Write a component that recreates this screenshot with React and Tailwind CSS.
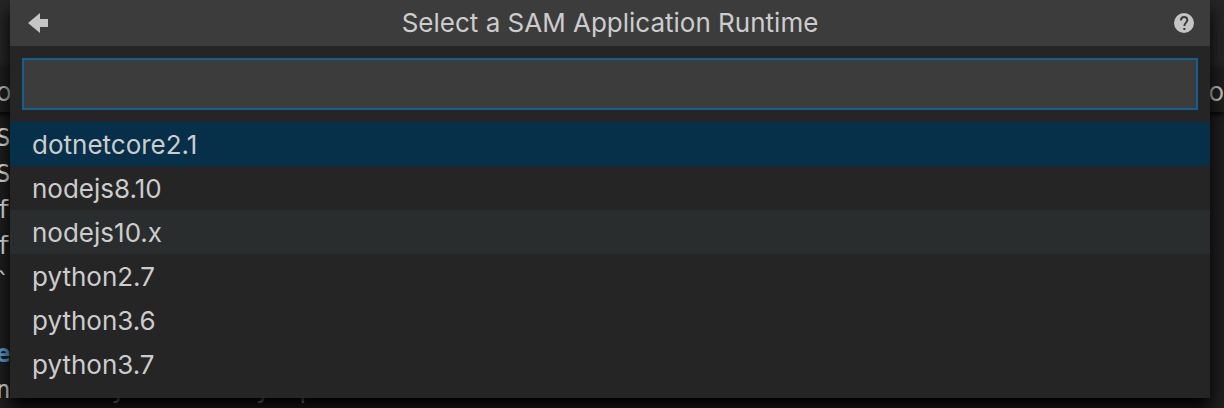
import React from 'react';

const runtimes = [
  { name: 'dotnetcore2.1', tone: 'bg-[#062f4a]' },
  { name: 'nodejs8.10', tone: '' },
  { name: 'nodejs10.x', tone: 'bg-[#2a2d2e]' },
  { name: 'python2.7', tone: '' },
  { name: 'python3.6', tone: '' },
  { name: 'python3.7', tone: '' },
];

const codeLines = [
  { text: 'S' },
  { text: 'S' },
  { text: 'f' },
  { text: 'f' },
  { text: '`' },
  { text: ' ' },
  { text: 'e', tone: 'font-bold text-[#569cd6]' },
  { text: 'n       y         y  p' },
];

function Editor() {
  return (
    <div aria-hidden="true" className="col-start-1 row-start-1 min-w-0 overflow-hidden bg-[#1e1e1e]">
      <div className="h-[68px] bg-[#252526]" />
      <div className="-ml-1 flex h-11 items-center justify-between bg-[#1e1e1e] pt-0.5 text-[26px] text-[#c0c0c0] shadow-[0_2px_6px_#000]">
        <span>o</span>
        <span>o</span>
      </div>
      <div className="-ml-1 h-[296px] overflow-hidden pt-2 font-['DejaVu_Sans_Mono',monospace] text-2xl leading-9 text-[#e4e4e4]">
        {codeLines.map((line, i) => (
          <div key={i} className={`whitespace-pre ${line.tone ?? ''}`}>{line.text}</div>
        ))}
      </div>
    </div>
  );
}

function QuickPick() {
  return (
    <section
      aria-labelledby="pick-title"
      className="relative col-start-1 row-start-1 mb-2.5 ml-2.5 mr-3.5 min-w-0 self-start bg-[#252526] shadow-[0_10px_16px_#000]"
    >
      <header className="flex h-[46px] items-center justify-between bg-[#3c3c3c] px-4">
        <button type="button" aria-label="Back" className="flex size-6 items-center justify-center text-[#c5c5c5]">
          <svg viewBox="0 0 20 20" className="size-5" fill="currentColor">
            <path d="M0 10 12 0v6h8v8h-8v6Z" />
          </svg>
        </button>
        <h1 id="pick-title" className="text-[26px] leading-8">Select a SAM Application Runtime</h1>
        <button type="button" aria-label="Help" className="-mr-1 flex size-7 items-center justify-center">
          <svg viewBox="0 0 20 20" className="size-5">
            <circle cx="10" cy="10" r="10" fill="#c5c5c5" />
            <path d="M6.9 7.5C6.9 5.3 8.3 4 10.1 4s3.2 1.2 3.2 3c0 2.6-2.9 2.7-2.9 6" fill="none" stroke="#3c3c3c" strokeWidth="2" />
            <path d="M9.3 15h2.1v2H9.3Z" fill="#3c3c3c" />
          </svg>
        </button>
      </header>
      <div className="p-3">
        <input
          type="text"
          aria-label="Filter runtimes"
          className="block h-[52px] w-full border-2 border-[#145f92] bg-[#3c3c3c] px-2 text-[26px] outline-none"
        />
      </div>
      <ul className="pb-3">
        {runtimes.map((runtime) => (
          <li key={runtime.name}>
            <button type="button" className={`block h-11 w-full px-[22px] pt-0.5 text-left text-[26px] leading-[42px] ${runtime.tone}`}>
              {runtime.name}
            </button>
          </li>
        ))}
      </ul>
    </section>
  );
}

export default function App() {
  return (
    <main className="grid grid-cols-1 bg-[#1e1e1e] font-['Inter',sans-serif] text-[#cccccc]">
      <Editor />
      <QuickPick />
    </main>
  );
}
